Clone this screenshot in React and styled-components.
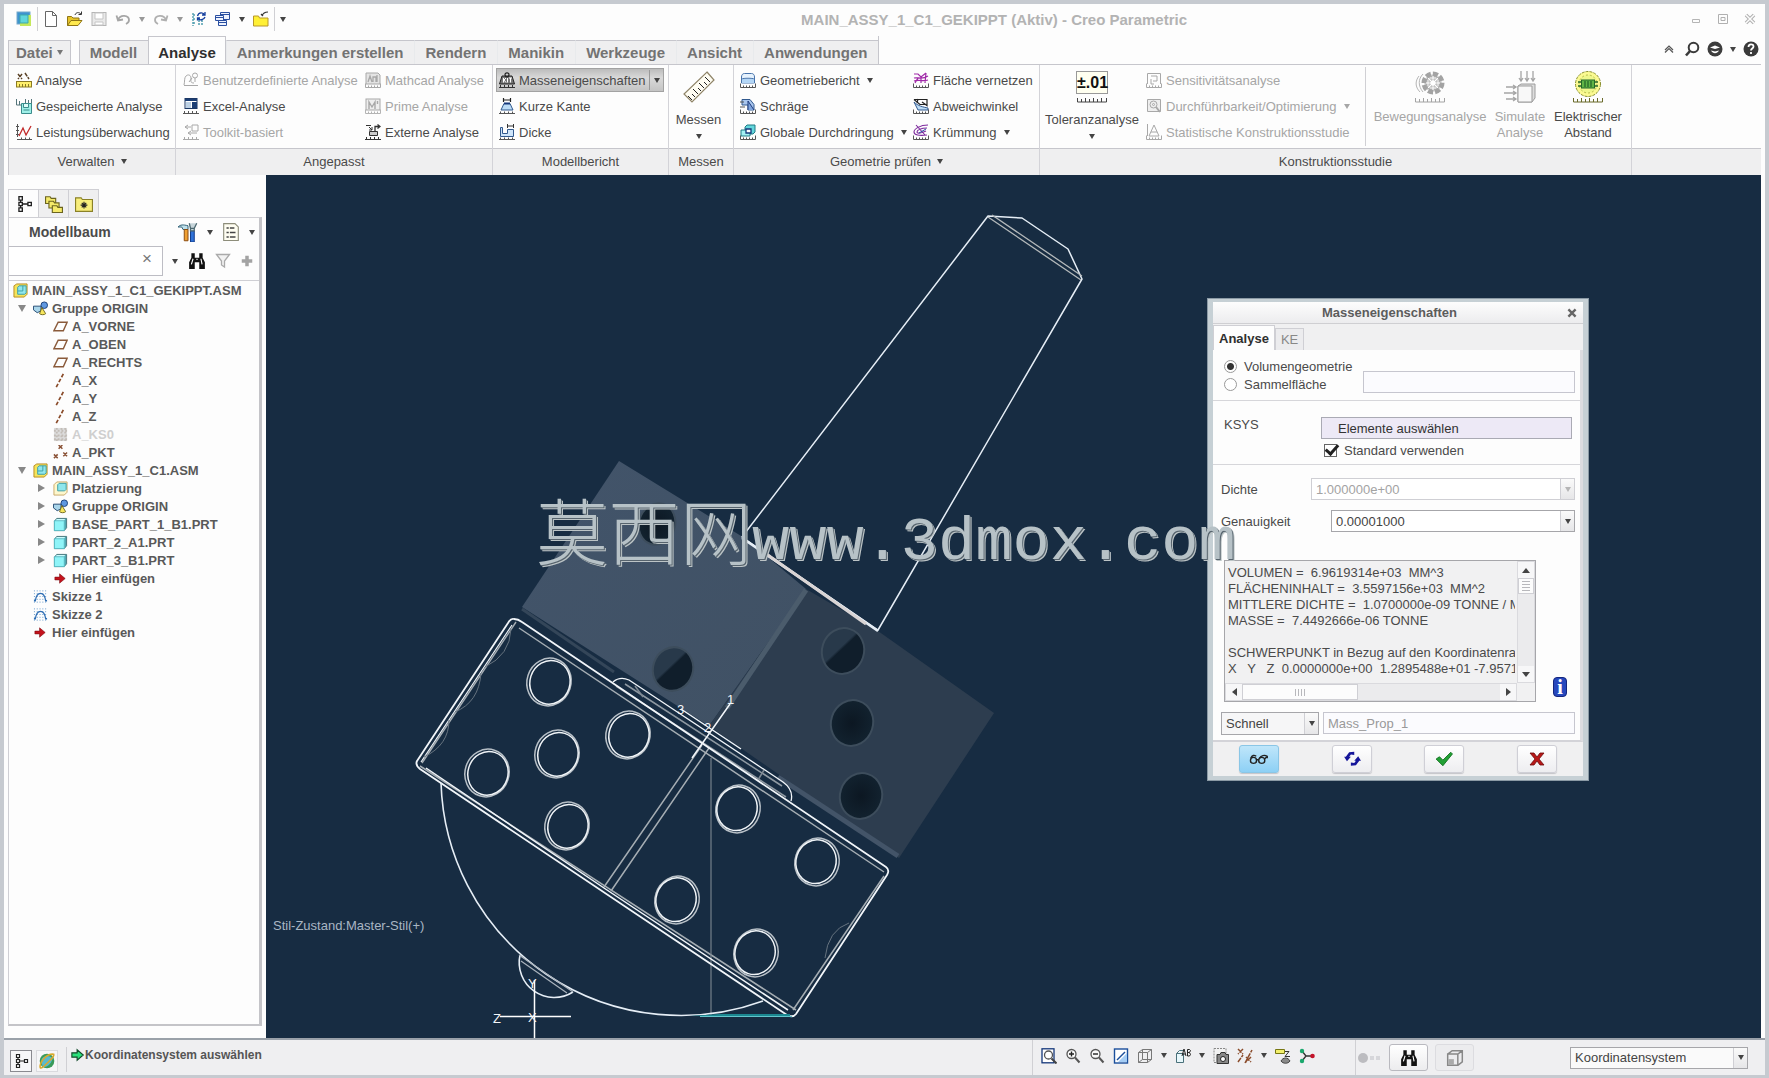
import React from 'react';
import styled, { createGlobalStyle, css } from 'styled-components';

const GlobalStyle = createGlobalStyle`
  * { box-sizing: border-box; }
  body {
    margin: 0;
    font-family: "Liberation Sans", Arial, sans-serif;
    font-size: 13px;
    color: #4a4a4a;
  }
  button, input, select, textarea {
    font: inherit;
    color: inherit;
    margin: 0;
  }
  button {
    background: none;
    border: 0;
    padding: 0;
  }
`;

/* ---------- drawings ---------- */

const ruler = (c = '#555') => (
  <path d="M.5 11.5v4h15v-4M3.5 13.5v2M6.5 13.5v2M9.5 13.5v2M12.5 13.5v2" stroke={c} fill="none" />
);

const bigRuler = (c = '#444') => (
  <path d="M1.5 27v4h29v-4M5.5 28v3M9.5 27v4M13.5 28v3M17.5 27v4M21.5 28v3M25.5 27v4" stroke={c} fill="none" />
);

const asmCube = (
  <>
    <path d="M1 3l3-2h11v11l-3 3H1z" fill="#f4e45a" stroke="#b88a20" />
    <path d="M5 4.500l1.500-1.500H14v7.500L12.500 12H5z" fill="#8fe6ec" stroke="#3b9da5" />
    <path d="M5 8.500h5.500V3" fill="none" stroke="#3b9da5" />
  </>
);

const prtCube = (
  <>
    <path d="M1.500 4.500l2.500-3h10.500v10L12 14.500H1.500z" fill="#4fa9b3" stroke="#46757c" />
    <rect x="1.500" y="4" width="10.500" height="10.500" fill="#8ff4f8" stroke="#5bbcc4" />
    <path d="M3 3.500l1-1.500h9l-1 1.500z" fill="#c9fbfd" />
  </>
);

const binoculars = (
  <>
    <path d="M3 1h3v4h4V1h3v4l2 4v6h-5V9H6v6H1V9l2-4z" fill="#111" />
    <path d="M4.500 6L3 11M11.500 6l1 5M7.500 6.500h1" stroke="#fff" />
  </>
);

const lens = (
  <>
    <circle cx="6.500" cy="6" r="4.500" fill="#fafafa" stroke="#555" strokeWidth="1.300" />
    <path d="M10 9.500l4.500 5" stroke="#555" strokeWidth="2" />
  </>
);

const redArrow = <path d="M2 6.500h5V3l6 5-6 5V9.500H2z" fill="#c4121c" stroke="#7a0c12" strokeWidth=".6" />;

const group = (
  <>
    <path d="M.5 5.500h8v5l-4 2-4-3z" fill="#a9d5ea" stroke="#234a72" />
    <circle cx="12" cy="4.500" r="3.500" fill="#5f97e0" stroke="#1b3f7a" />
    <path d="M9.500 7l4 6.500c-1.500 1.500-5 1.500-6.500 0z" fill="#f7e65c" stroke="#6d6520" />
  </>
);

const treeNodes = (
  <path d="M3.500 1.500h3v3h-3zM3.500 6.500h3v3h-3zM3.500 11.500h3v3h-3zM11.500 6.500h3v3h-3zM5 4.500v2M5 9.500v2M6.500 8h5" fill="none" stroke="#222" strokeWidth="1.200" />
);

const sketch = (
  <>
    <path d="M1 2h14M1 5h14M1 8h14M1 11h14M1 14h14" stroke="#5b93c9" strokeDasharray="1 2" />
    <path d="M1 12.500h1.500c1.500-10.500 9.500-10.500 11 0H15" fill="none" stroke="#2e6db3" strokeWidth="1.400" />
  </>
);

const glyphs = {
  logo: (
    <>
      <rect x="1" y="1" width="13" height="12" fill="#3d93d0" stroke="#77a9ca" />
      <path d="M4 4h11v11H4z" fill="#c4e85b" />
      <path d="M4 4h8v8H4z" fill="#5fd6dc" stroke="#3fa9a9" />
    </>
  ),
  fileNew: <path d="M2.500.5h7l4 4v11h-11zM9.500.5v4h4" fill="#fff" stroke="#666" />,
  fileOpen: (
    <>
      <path d="M.5 14.500v-9h4l1.500 1.500h6v3" fill="#e6c42b" stroke="#8f7515" />
      <path d="M.5 14.500l3.500-5h11l-4 5z" fill="#ffe94e" stroke="#8f7515" />
      <path d="M8 4c1-3 4-3 6-1M14.500.5v3h-3" fill="none" stroke="#333" />
    </>
  ),
  save: (
    <>
      <rect x="1" y="1.500" width="14" height="13" fill="#e9e9e9" stroke="#b5b5b5" />
      <path d="M4 2h8v6H4zM4 11h8v3H4z" fill="#fff" stroke="#c5c5c5" />
    </>
  ),
  undo: <path d="M3 9c2-6 11-5 11 0 0 2-1 3-3 4M1.500 4.500L3 9.500l5-1" fill="none" stroke="#a6a6a6" strokeWidth="1.800" />,
  redo: <path d="M13 9C11 3 2 4 2 9c0 2 1 3 3 4M14.500 4.500L13 9.500l-5-1" fill="none" stroke="#b0b0b0" strokeWidth="1.800" />,
  regen: (
    <>
      <path d="M2 2v13M2 4h3M2 8h3M2 12h3M7 10h5M7 13h6" stroke="#4f9dae" strokeDasharray="2 1" strokeWidth="1.400" />
      <path d="M6.500 5c1-4 6-4 7-1M14 1v3h-3M14 6c-1 3-6 4-7 1M6.500 9.500V7H9" fill="none" stroke="#153f9e" strokeWidth="1.300" />
    </>
  ),
  windows: (
    <g fill="#eef3ff" stroke="#2a4fa0">
      <path d="M5.500 1.500h9v7h-9zM5.500 3.500h9" />
      <path d="M.5 4.500h8v5h-8zM.5 6.500h8" />
      <path d="M3.500 9.500h8v5h-8zM3.500 11.500h8" />
    </g>
  ),
  closeDir: (
    <>
      <path d="M.5 15V5h5l1 2H15v8z" fill="#fff035" stroke="#b8982a" />
      <path d="M8 3l2 2M9 5c1-3 3-4 6-4" fill="none" stroke="#333" strokeWidth="1.200" />
    </>
  ),
  analysis: (
    <>
      <path d="M2 2l4 5M6 2L2 7M9 1l4 6" stroke="#5a4126" strokeWidth="1.500" strokeDasharray="4 1" />
      <rect x=".5" y="9.500" width="15" height="5.500" fill="#ffef6b" stroke="#8b7a22" />
      <path d="M3.500 12v3M6.500 12v3M9.500 12v3M12.500 12v3" stroke="#8b7a22" />
    </>
  ),
  saved: (
    <>
      <path d="M.5 1v6h6M3.500 3v4M9.500 1v4M12.500 2v3M15.500 1v5" fill="none" stroke="#55747a" />
      <path d="M5.500 5.500h10v10h-10z" fill="#9ff0e8" stroke="#3b8c8c" />
      <path d="M7.500 5.500h5v4h-5zM7.500 12h6" fill="#dffcf8" stroke="#3b8c8c" />
    </>
  ),
  monitor: (
    <>
      <path d="M1.500 0v13M0 2.500h3M0 6.500h3M0 10.500h3M1 15.500h15M5.500 13.500v2M9.500 13.500v2M13.500 13.500v2" stroke="#555" />
      <path d="M3 12l4-8 3 7 5-9" fill="none" stroke="#c22a2a" strokeWidth="1.300" />
    </>
  ),
  userDef: (
    <g fill="none" stroke="#a8a8a8">
      <path d="M1 13c1-4 0-7 2-9s5-1 5 2-1 5 3 5" /><circle cx="12" cy="3.500" r="2.500" /><path d="M9 6l-3 4M12 6v4M1 13.500h14" />
    </g>
  ),
  excel: (
    <>
      <rect x="2" y=".5" width="12" height="10" fill="#fff" stroke="#1b3764" />
      <path d="M2 1h12v2H2zM9 4h5v6H9z" fill="#1c3e74" />
      <path d="M3 5h5M3 7h5M3 9h5" stroke="#7ba2c9" />
      <path d="M0 15.500h16M1.500 13v2M5.500 13v2M9.500 13v2M13.500 13v2" stroke="#555" />
    </>
  ),
  toolkit: (
    <g fill="none" stroke="#a8a8a8">
      <path d="M2 3h6M5 1L2 3l3 2M9 1h6v6H9zM14 9H5M8 7l-3 2 3 2" />
      <path d="M0 15.500h16M1.500 13v2M5.500 13v2M9.500 13v2M13.500 13v2" />
    </g>
  ),
  mathcad: (
    <g stroke="#a8a8a8" fill="#e4e4e4">
      <path d="M1 1h12l2 2v9H1z" /><path d="M3 10l2-6 2 6M8 10V5h3v5M12 10V3" fill="none" strokeWidth="1.300" />{ruler('#a8a8a8')}
    </g>
  ),
  prime: (
    <g stroke="#a8a8a8" fill="none">
      <rect x="1" y="1" width="14" height="11" fill="#eee" /><path d="M4 11V4l3 5 3-5v7M12.500 3v3" strokeWidth="1.400" />{ruler('#b4b4b4')}
    </g>
  ),
  external: (
    <g stroke="#333" fill="none">
      <path d="M1 1.500h5M4 3l3 3M7 3v3H4" /><path d="M4.500 7.500h8v4h-8z" fill="#ccc" /><path d="M10 7V2.500h4M12.500.5l2.500 2-2.500 2" strokeWidth="1.300" />
      <path d="M0 15.500h16M1.500 13v2M5.500 13v2M9.500 13v2M13.500 13v2" />
    </g>
  ),
  mass: (
    <>
      <path d="M3 4h10l2.500 8H.5z" fill="#777" stroke="#222" />
      <circle cx="8" cy="2.800" r="2" fill="none" stroke="#222" strokeWidth="1.200" />
      <path d="M4.500 6v4.500M7 6L5 8l2 2.500M8.500 6v4.500M10 6h3M11.500 6v4.500" fill="none" stroke="#fff" />
      <path d="M0 15.500h16M1.500 13v2M5.500 13v2M9.500 13v2M13.500 13v2" stroke="#333" />
    </>
  ),
  shortEdge: (
    <>
      <path d="M4.500 0v4M11.500 0v4M4.500 2h7" stroke="#222" strokeWidth="1.200" />
      <path d="M5 5.500h6l3 6.500H2z" fill="#bcdcf6" stroke="#31598e" />
      <path d="M5 5.500h6" stroke="#15377a" strokeWidth="2" />
      <path d="M0 15.500h16M1.500 13.500v2M5.500 13.500v2M9.500 13.500v2M13.500 13.500v2" stroke="#555" />
    </>
  ),
  thick: (
    <>
      <path d="M1.500 3.500h2v6h5v-4h6v7h-13z" fill="#cfe5fa" stroke="#31598e" />
      <path d="M8.500 0v4M14.500 0v4M8.500 2h6" stroke="#333" />
      <path d="M0 15.500h16M1.500 13.500v2M5.500 13.500v2M9.500 13.500v2M13.500 13.500v2" stroke="#555" />
    </>
  ),
  geometry: (
    <>
      <path d="M1.500 11V5c0-2 1-3.500 3-3.500h7c2 0 3 1.500 3 3.500v6z" fill="#e6f2fd" stroke="#4773ab" />
      <path d="M2 7h12v4H2z" fill="#b3d6f6" />
      <path d="M1.500 7c2-1 11-1 13 0" stroke="#4773ab" fill="none" />
      {ruler('#555')}
    </>
  ),
  draft: (
    <>
      <path d="M2 1.500h8l4 5V12H8V7H2z" fill="#a9c6ee" stroke="#31598e" />
      <path d="M8 12V3l6 9" fill="#7fa5dd" stroke="#1f3b7d" />
      <path d="M0 4h4M0 9h5" stroke="#555" />
      {ruler('#555')}
    </>
  ),
  interference: (
    <>
      <path d="M5 3l2-2h8v7l-2 2H5z" fill="#63d6dc" stroke="#207a84" />
      <path d="M1 6h9v6H1z" fill="#a3f0f3" stroke="#207a84" />
      <path d="M6 5h5v4H6z" fill="#fff" stroke="#15377a" strokeWidth="1.300" />
      {ruler('#555')}
    </>
  ),
  mesh: (
    <>
      <path d="M1 2h4l3 3 5-4M1 6c4-1 8 2 14-2M2 11l3-5M8 11V5M12 11l1-10M1 9c5-2 8 1 14-1" fill="none" stroke="#a02aa8" strokeWidth="1.200" />
      {ruler('#555')}
    </>
  ),
  deviation: (
    <>
      <path d="M1 4c4 4 9 5 14 6v2H5C4 9 2 7 1 4z" fill="#bcdcf6" stroke="#31598e" />
      <path d="M1 1.500h13v6L9 4M1 1.500l6 5h6M5 1l-1 4" fill="none" stroke="#222" strokeWidth="1.200" />
      {ruler('#555')}
    </>
  ),
  curvature: (
    <>
      <path d="M15 1C7 1 1 5 1 8s5 4 13 3M14 4C8 4 4 6 4 8s5 1 9-1M3 1l9 10" fill="none" stroke="#7d2a9d" strokeWidth="1.100" />
      <path d="M13 5L6 9" stroke="#2a55a5" />
      {ruler('#555')}
    </>
  ),
  sensitivity: (
    <g fill="none" stroke="#a8a8a8"><path d="M1.500 12V1.500h13V12M5 4h6v5H7M5 7v5h3" />{ruler('#a8a8a8')}</g>
  ),
  feasibility: (
    <g fill="none" stroke="#a8a8a8"><path d="M1.500 1.500h13v12h-13z" fill="#eee" /><circle cx="7.500" cy="6.500" r="3.500" /><circle cx="7.500" cy="6.500" r="1" /><path d="M10 9l4 5" strokeWidth="2" /></g>
  ),
  statistic: (
    <g fill="none" stroke="#a8a8a8"><path d="M1.500 0v12M3 12L8 1l5 11zM5 8h6" />{ruler('#a8a8a8')}</g>
  ),
  folders: (
    <g fill="#f5ea6a" stroke="#6b641f">
      <path d="M.5 7.500V1.500h4l1 1.500h4v4.500z" /><path d="M3.500 11.500v-6h4l1 1.500h4v4.500z" /><path d="M6.500 15.500v-6h4l1 1.500h4v4.500z" />
    </g>
  ),
  favFolder: (
    <>
      <path d="M.5 14.500v-12h5l1 1.500h9v10.500z" fill="#f8ee7c" stroke="#8a8127" />
      <path d="M8 6v6M5 9h6M6 7l4 4M10 7l-4 4" stroke="#222" />
    </>
  ),
  tools: (
    <>
      <path d="M0 4c2-2 4-2 8-1v3H4L3 4z" fill="#bfe0ea" stroke="#34657a" strokeWidth=".8" />
      <path d="M5 6h3v9H5z" fill="#f0a032" stroke="#8d4d10" strokeWidth=".8" />
      <path d="M10 7h3v9h-3z" fill="#2f72d8" stroke="#143d8a" strokeWidth=".8" />
      <path d="M9 1l1 4h3l2-4M10 5v2h3V5" fill="#c7d5da" stroke="#4c6870" />
    </>
  ),
  list: (
    <>
      <path d="M1.500.5h10l3 3v12h-13z" fill="#fffef2" stroke="#8d8d7a" />
      <path d="M4 4.500h2M7 4.500h4M4 8.500h2M7 8.500h5M4 12.500h2M7 12.500h5" stroke="#444" strokeWidth="1.300" />
    </>
  ),
  binoculars,
  funnel: <path d="M1.500 1.500h13L9.500 8v6l-3-2V8z" fill="#f2f2f2" stroke="#aaa" strokeWidth="1.300" />,
  plus: <path d="M8 2v12M2 8h12" stroke="#a3a3a3" strokeWidth="4" />,
  asm: asmCube,
  prt: prtCube,
  group,
  placement: (
    <>
      <path d="M1 4l3-3h11v11l-3 3H1z" fill="#fdf7cd" stroke="#c8a766" />
      <path d="M5 4l1.500-1.500H14V9l-1.500 1.500H5z" fill="#8fe6ec" stroke="#3b9da5" />
    </>
  ),
  plane: <path d="M5.500 3.500h9.500l-4 9H1z" fill="none" stroke="#8a5a3a" strokeWidth="1.500" />,
  axis: <path d="M11 1L3 16" stroke="#8a4b2a" strokeWidth="1.800" strokeDasharray="4 2" />,
  csys: (
    <>
      <rect x="1" y="1" width="14" height="14" fill="#dcdcdc" />
      <path d="M1 4h14M1 9h14M1 13h14M4 1v14M9 1v14M13 1v14" stroke="#c2bcb6" strokeDasharray="2 2" strokeWidth="2" />
    </>
  ),
  point: <path d="M6 0l4 4M10 0L6 4M1 10l4 4M5 10l-4 4M11 8l4 4M15 8l-4 4" stroke="#8a5236" strokeWidth="1.600" />,
  sketch,
  insert: redArrow,
  treeNodes,
  browser: (
    <>
      <circle cx="8" cy="8" r="6.500" fill="#3a9b5a" />
      <path d="M3 8c0-5 8-6 10-2-2 6-6 8-9 7z" fill="#58b9cf" />
      <path d="M2 14C1 9 8 1 14 2c1 2-3 5-6 8-3 3-5 5-6 4z" fill="none" stroke="#d9a92d" strokeWidth="1.400" />
    </>
  ),
  prompt: <path d="M1 5.500h6V2l7 6-7 6v-3.500H1z" fill="#2be07a" stroke="#124a2a" strokeWidth="1.300" />,
  refit: (
    <>
      <rect x="1" y=".8" width="12" height="14" fill="#fff" stroke="#15377a" strokeWidth="1.300" />
      <circle cx="7.500" cy="7" r="4" fill="none" stroke="#555" strokeWidth="1.300" />
      <path d="M10.500 10.500l5 5" stroke="#444" strokeWidth="2" />
    </>
  ),
  zoomIn: <>{lens}<path d="M4 6h5M6.500 3.500v5" stroke="#222" strokeWidth="1.400" /></>,
  zoomOut: <>{lens}<path d="M4 6h5" stroke="#222" strokeWidth="1.400" /></>,
  repaint: (
    <>
      <rect x="1.500" y="1" width="13" height="14" fill="#fff" stroke="#1b4f9c" strokeWidth="1.400" />
      <path d="M14 5v9H5z" fill="#a5cdf5" /><path d="M4 12l8-8" stroke="#1b4f9c" strokeWidth="1.500" />
    </>
  ),
  display: <path d="M1.500 4.500h9v10h-9zM1.500 4.500l4-3h9v10l-4 3M10.500 4.500l4-3M5.500 1.500v10h9M1.500 14.500l4-3" fill="none" stroke="#777" />,
  saved3d: (
    <>
      <path d="M1.500 5.500h7v9h-7zM1.500 5.500l3-3h4" fill="#e8f7fb" stroke="#49707a" />
      <path d="M7 8l2-7 2 7M8 6h2M12.500 8V1.500h2l1 1-1 2 1 2-1 1.500zM12.500 4.500h2" fill="none" stroke="#222" />
    </>
  ),
  camera: (
    <>
      <rect x="1" y=".5" width="12" height="14" fill="#f2f2f2" stroke="#888" strokeDasharray="2 1" />
      <path d="M4 6.500h3l1-2h4l1 2h2.500v9H4z" fill="#888" stroke="#333" /><circle cx="10" cy="11" r="2.500" fill="#fff" stroke="#222" />
    </>
  ),
  datum: <path d="M1 1l5 5M6 1L1 6M8 15L15 2M9 9l5 5M14 9l-5 5M1 14l5-7" stroke="#8a4b2a" strokeWidth="1.500" strokeDasharray="5 1" />,
  annotate: (
    <>
      <path d="M.5 1.500h9v4h-9z" fill="#f3f06c" stroke="#777714" /><path d="M10 3.500h4l-4 5h5" fill="none" stroke="#333" />
      <path d="M6 13c2-4 7-4 9 0-2 3-7 3-9 0z" fill="#8a8a8a" stroke="#444" />
    </>
  ),
  spin: (
    <>
      <path d="M3 3l4 5-4 5M7 8h6" fill="none" stroke="#333" strokeWidth="1.400" />
      <circle cx="3" cy="3" r="2.200" fill="#1aa86d" /><circle cx="3" cy="13" r="2.200" fill="#1aa86d" /><circle cx="13.500" cy="8" r="2.300" fill="#c4132a" />
    </>
  ),
  box3d: (
    <>
      <path d="M1.500 4.500h9v10h-9zM1.500 4.500l4-3h9v10l-4 3M10.500 4.500l4-3" fill="none" stroke="#888" strokeWidth="1.300" />
      <rect x="2" y="9" width="5" height="5" fill="#aaa" />
    </>
  ),
  minimize: <path d="M4.500 8.500h7v3h-7z" fill="none" stroke="#b5b5b5" />,
  maximize: <path d="M3.500 3.500h9v9h-9zM6 6.500h4v3H6z" fill="none" stroke="#b0b0b0" />,
  closeWin: (
    <>
      <path d="M4 4l8 8M12 4l-8 8" stroke="#b0b0b0" strokeWidth="3.500" />
      <path d="M4 4l8 8M12 4l-8 8" stroke="#fdfdfd" strokeWidth="1.500" />
    </>
  ),
  collapse: <path d="M4 9l4-4 4 4M4 11.500l4-4 4 4" fill="none" stroke="#555" strokeWidth="1.200" />,
  search: (
    <>
      <circle cx="9.500" cy="6.500" r="4.800" fill="none" stroke="#3a3a3a" strokeWidth="2" /><path d="M6 10l-4 4.500" stroke="#3a3a3a" strokeWidth="2.600" />
    </>
  ),
  learn: (
    <>
      <circle cx="8" cy="8" r="7.500" fill="#3d3d3d" /><path d="M3 6.500l5-2 5 2-5 1.500z" fill="#fff" /><path d="M4 9.500c2 3.500 6 3.500 8 0l-4 1z" fill="#fff" />
    </>
  ),
  help: (
    <>
      <circle cx="8" cy="8" r="7.500" fill="#3a3a3a" /><path d="M5.500 6c0-3.500 5-3.500 5-.5 0 2-2.500 2-2.500 4M8 11v2" fill="none" stroke="#fff" strokeWidth="1.800" />
    </>
  ),
  glasses: (
    <g fill="none" stroke="#222" strokeWidth="1">
      <circle cx="4" cy="9" r="2.200" /><circle cx="10" cy="9" r="2.200" />
      <path d="M6.200 8.500h1.600M2 7.500C3 5 4.500 5 6 6M8.300 7.500C9.500 5.500 12 5 14 6v1.500M12 8l1.500-1.500" />
    </g>
  ),
  repeat: (
    <g fill="#16169a">
      <path d="M10 1.500L5.500 2 2.500 6H1l2.500 4L7 6H5.500L7 4l3 .5z" />
      <path d="M7 14l4.500-.5 3-4H16l-2.500-4L10 9.500h1.500l-1.500 2-3-.5z" />
    </g>
  ),
  ok: <path d="M1 8l3-2 3 3 7-7 1.500 1.500L7 14z" fill="#22a035" stroke="#12701f" strokeWidth=".8" />,
  cancel: <path d="M1 2h4l3 4 3-4h4l-5 6 5 6h-4l-3-4-3 4H1l5-6z" fill="#b81818" stroke="#6d0a0a" strokeWidth=".8" />,
};

const bigGlyphs = {
  measure: (
    <>
      <path d="M24 1l7 8L9 31 1 23z" fill="#fffdf3" stroke="#8f8468" strokeWidth="1.200" />
      <path d="M9 29l-4-4M12 26l-3-3M15 23l-5-5M18 20l-3-3M21 17l-5-5M24 14l-3-3M27 11l-5-5" stroke="#222" />
    </>
  ),
  motion: (
    <>
      <g fill="#d7d7d7" stroke="#a3a3a3">
        <circle cx="19" cy="12" r="9" strokeWidth="5" strokeDasharray="5 2" /><circle cx="19" cy="12" r="7" /><circle cx="19" cy="12" r="3.500" fill="#fff" />
        <path d="M19 5v4M19 15v4M12 12h4M22 12h4M14 7l3 3M24 17l-3-3M24 7l-3 3M14 17l3-3" stroke="#fff" />
      </g>
      <path d="M5 5c-4 5-4 11 1 16M9 3C4 8 4 15 9 21" fill="none" stroke="#b5b5b5" />
      {bigRuler('#a3a3a3')}
    </>
  ),
  simulate: (
    <>
      <path d="M14 15l3-2h14v14l-3 4H14z" fill="#ddd" stroke="#9c9c9c" /><path d="M14 15h14v16H14z" fill="#f8f8f8" stroke="#9c9c9c" />
      <path d="M17 0v9M23 0v9M29 0v9M15 7l2 3 2-3M21 7l2 3 2-3M27 7l2 3 2-3M2 16h9M0 22h11M2 28h9M9 14l3 2-3 2M9 20l3 2-3 2M9 26l3 2-3 2" fill="none" stroke="#a5a5a5" strokeWidth="1.300" />
    </>
  ),
  electric: (
    <>
      <circle cx="16" cy="13" r="12.500" fill="#fbfa92" stroke="#8a9030" strokeDasharray="3 1" />
      <circle cx="16" cy="13" r="9" fill="#eef78c" stroke="#b6bc4b" strokeDasharray="2 2" />
      <rect x="9.500" y="9" width="13" height="8" fill="#5fb545" stroke="#24682a" />
      <path d="M6 11h3M6 15h3M23 11h3M23 15h3M13 10v6M16 10v6M19 10v6" stroke="#24682a" strokeWidth="1.300" />
      {bigRuler('#6a6a2a')}
    </>
  ),
};

const Svg = styled.svg`
  display: block;
  flex: none;
`;

const Glyph = ({ name, size = 16 }) => (
  <Svg width={size} height={size} viewBox="0 0 16 16" aria-hidden="true">{glyphs[name]}</Svg>
);

const BigGlyph = ({ name }) => (
  <Svg width="32" height="32" viewBox="0 0 32 32" aria-hidden="true">{bigGlyphs[name]}</Svg>
);

const Caret = styled.span`
  flex: none;
  width: 0;
  height: 0;
  border: 3px solid transparent;
  border-top: 5px solid ${p => p.$color || '#444'};
  border-bottom: 0;
`;

/* ---------- window frame ---------- */

const Frame = styled.div`
  height: 100vh;
  display: flex;
  flex-direction: column;
  border: 4px solid #c6cad0;
  border-bottom-width: 3px;
  background: #fdfdfd;
  overflow: hidden;
`;

const TitleBar = styled.header`
  display: flex;
  align-items: center;
  height: 30px;
  padding: 0 7px 0 12px;
`;

const QuickBar = styled.div`
  display: flex;
  align-items: center;
  gap: 8px;
  flex: 11;
`;

const WindowTitle = styled.h1`
  margin: 0;
  font-size: 15px;
  font-weight: bold;
  color: #b3b3b3;
`;

const WindowButtons = styled.div`
  flex: 8;
  display: flex;
  justify-content: flex-end;
  gap: 11px;
`;

const Divider = styled.span`
  flex: none;
  align-self: stretch;
  width: 1px;
  background: #d0d0d4;
`;

const QuickDivider = styled(Divider)`
  align-self: center;
  height: 24px;
  margin: 0 -3px;
`;

const IconButton = styled.button`
  display: flex;
  align-items: center;
  justify-content: center;
`;

/* ---------- ribbon ---------- */

const TabStrip = styled.nav`
  display: flex;
  align-items: flex-end;
  height: 30px;
  padding: 0 6px 0 4px;
`;

const TabGroup = styled.div`
  display: flex;
  align-items: flex-end;
  border-right: 1px solid #c6c6cc;
`;

const Tab = styled.button`
  height: ${p => (p.$active ? 28 : 24)}px;
  padding: ${p => (p.$active ? '3px 9px 0' : '0 11px 0 10px')};
  display: flex;
  align-items: center;
  gap: 4px;
  font-size: 15px;
  font-weight: bold;
  color: ${p => (p.$active ? '#2f2f2f' : '#737373')};
  background: ${p => (p.$active ? '#fdfdfd' : '#efeff0')};
  border-top: 1px solid #c6c6cc;
  border-left: 1px solid ${p => (p.$edge || p.$active ? '#c6c6cc' : '#e8eaec')};
  ${p => p.$active && css`border-right: 1px solid #c6c6cc;`}
  ${p => p.$file && css`
    margin-right: 8px;
    padding: 0 7px;
    border-right: 1px solid #c6c6cc;
  `}
`;

const TabTools = styled.div`
  margin-left: auto;
  align-self: center;
  display: flex;
  align-items: center;
  gap: 7px;
`;

const Ribbon = styled.section`
  display: flex;
  height: 111px;
  margin: 0 4px;
  border-top: 1px solid #c6c6cc;
  border-left: 1px solid #c6c6cc;
  background: linear-gradient(#fdfdfd 83px, #c6c6cc 83px, #c6c6cc 84px, #efeff0 84px);
`;

const RibbonGroup = styled.div`
  flex: none;
  width: ${p => p.$width}px;
  display: flex;
  flex-direction: column;
  border-right: 1px solid #d3d3d8;
`;

const GroupBody = styled.div`
  height: 83px;
  padding: 2px 0 2px ${p => p.$pad || 7}px;
  display: flex;
`;

const GroupLabel = styled.div`
  flex: 1;
  display: flex;
  align-items: center;
  justify-content: center;
  gap: 6px;
`;

const Column = styled.div`
  flex: none;
  width: ${p => p.$width}px;
  display: flex;
  flex-direction: column;
`;

const Command = styled.button`
  height: 26px;
  display: flex;
  align-items: center;
  gap: 4px;
  white-space: nowrap;
  color: ${p => (p.disabled ? '#a6a6a6' : '#4a4a4a')};
  ${Caret} { margin-left: 3px; }
`;

const SplitCommand = styled.div`
  display: flex;
  align-items: center;
  height: 24px;
  margin: 1px 0;
  width: 168px;
  padding-left: 2px;
  border: 1px solid #a2a2a2;
  background: linear-gradient(#bcbcbc, #d9d9d9 40%, #c4c4c4);
`;

const SplitArrow = styled.button`
  margin-left: auto;
  width: 14px;
  height: 20px;
  border-left: 1px solid #999;
  display: flex;
  align-items: center;
  justify-content: center;
`;

const Indent = styled.div`
  padding-left: 3px;
`;

const StudyColumn = styled.div`
  padding-left: 5px;
`;

const BigCommand = styled.button`
  display: flex;
  flex-direction: column;
  align-items: center;
  width: ${p => p.$width}px;
  padding-top: 4px;
  line-height: 16px;
  color: ${p => (p.disabled ? '#a6a6a6' : '#4a4a4a')};
  ${Caret} { margin-top: 6px; }
`;

const BigLabel = styled.span`
  margin-top: ${p => p.$gap || 6}px;
  white-space: pre-line;
`;

const Tolerance = styled.span`
  width: 32px;
  height: 23px;
  border: 1px solid #999;
  background: #fffff0;
  font-size: 16px;
  line-height: 22px;
  font-weight: bold;
  color: #111;
`;

const verwalten = [
  ['analysis', 'Analyse'],
  ['saved', 'Gespeicherte Analyse'],
  ['monitor', 'Leistungsüberwachung'],
];
const angepasst = [
  ['userDef', 'Benutzerdefinierte Analyse', true],
  ['excel', 'Excel-Analyse'],
  ['toolkit', 'Toolkit-basiert', true],
];
const angepasst2 = [
  ['mathcad', 'Mathcad Analyse', true],
  ['prime', 'Prime Analyse', true],
  ['external', 'Externe Analyse'],
];
const pruefen = [
  ['geometry', 'Geometriebericht', false, true],
  ['draft', 'Schräge'],
  ['interference', 'Globale Durchdringung', false, true],
];
const pruefen2 = [
  ['mesh', 'Fläche vernetzen'],
  ['deviation', 'Abweichwinkel'],
  ['curvature', 'Krümmung', false, true],
];
const studie = [
  ['sensitivity', 'Sensitivitätsanalyse', true],
  ['feasibility', 'Durchführbarkeit/Optimierung', true, true],
  ['statistic', 'Statistische Konstruktionsstudie', true],
];

function CommandColumn({ items, width }) {
  return (
    <Column $width={width}>
      {items.map(([icon, label, disabled, menu]) => (
        <Command key={label} disabled={disabled}>
          <Glyph name={icon} />
          {label}
          {menu && <Caret $color={disabled ? '#a6a6a6' : '#444'} />}
        </Command>
      ))}
    </Column>
  );
}

function RibbonBar() {
  return (
    <Ribbon>
      <RibbonGroup $width={167}>
        <GroupBody><CommandColumn items={verwalten} width={150} /></GroupBody>
        <GroupLabel>Verwalten <Caret /></GroupLabel>
      </RibbonGroup>
      <RibbonGroup $width={317}>
        <GroupBody>
          <CommandColumn items={angepasst} width={182} />
          <CommandColumn items={angepasst2} width={120} />
        </GroupBody>
        <GroupLabel>Angepasst</GroupLabel>
      </RibbonGroup>
      <RibbonGroup $width={176}>
        <GroupBody $pad={3}>
          <Column $width={168}>
            <SplitCommand>
              <Command><Glyph name="mass" />Masseneigenschaften</Command>
              <SplitArrow aria-label="Masseneigenschaften Optionen"><Caret /></SplitArrow>
            </SplitCommand>
            <Indent>
              <Command><Glyph name="shortEdge" />Kurze Kante</Command>
              <Command><Glyph name="thick" />Dicke</Command>
            </Indent>
          </Column>
        </GroupBody>
        <GroupLabel>Modellbericht</GroupLabel>
      </RibbonGroup>
      <RibbonGroup $width={65}>
        <GroupBody $pad={1}>
          <BigCommand $width={57}>
            <BigGlyph name="measure" />
            <BigLabel $gap={9}>Messen</BigLabel>
            <Caret />
          </BigCommand>
        </GroupBody>
        <GroupLabel>Messen</GroupLabel>
      </RibbonGroup>
      <RibbonGroup $width={306}>
        <GroupBody $pad={6}>
          <CommandColumn items={pruefen} width={173} />
          <CommandColumn items={pruefen2} width={125} />
        </GroupBody>
        <GroupLabel>Geometrie prüfen <Caret /></GroupLabel>
      </RibbonGroup>
      <RibbonGroup $width={592}>
        <GroupBody $pad={3}>
          <BigCommand $width={98}>
            <Tolerance>±.01</Tolerance>
            <Svg width="32" height="9" viewBox="0 23 32 9" aria-hidden="true">{bigRuler()}</Svg>
            <BigLabel $gap={9}>Toleranzanalyse</BigLabel>
            <Caret />
          </BigCommand>
          <StudyColumn>
            <CommandColumn items={studie} width={219} />
          </StudyColumn>
          <Divider />
          <BigCommand $width={128} disabled>
            <BigGlyph name="motion" />
            <BigLabel>Bewegungsanalyse</BigLabel>
          </BigCommand>
          <BigCommand $width={52} disabled>
            <BigGlyph name="simulate" />
            <BigLabel>{'Simulate\nAnalyse'}</BigLabel>
          </BigCommand>
          <BigCommand $width={84}>
            <BigGlyph name="electric" />
            <BigLabel>{'Elektrischer\nAbstand'}</BigLabel>
          </BigCommand>
        </GroupBody>
        <GroupLabel>Konstruktionsstudie</GroupLabel>
      </RibbonGroup>
    </Ribbon>
  );
}

/* ---------- model tree ---------- */

const Main = styled.main`
  flex: 1;
  min-height: 0;
  display: flex;
`;

const SidePanel = styled.aside`
  flex: none;
  width: 262px;
  padding: 14px 4px 12px 4px;
  display: flex;
  flex-direction: column;
`;

const PanelTabs = styled.div`
  display: flex;
`;

const PanelTab = styled.button`
  width: 31px;
  height: 28px;
  display: flex;
  align-items: center;
  justify-content: center;
  border: 1px solid #cfcfd4;
  border-width: 1px 1px 0 1px;
  margin-right: -1px;
  background: ${p => (p.$active ? '#fdfdfd' : '#efeff0')};
`;

const PanelBody = styled.div`
  flex: 1;
  border: 1px solid #cfcfd4;
  border-right: 3px solid #c4c4c8;
  border-bottom: 2px solid #c4c4c8;
`;

const PanelHead = styled.div`
  display: flex;
  align-items: center;
  height: 28px;
  padding: 0 4px 0 20px;
`;

const PanelTitle = styled.h2`
  margin: 0 auto 0 0;
  font-size: 14px;
`;

const HeadTools = styled.div`
  display: flex;
  align-items: center;
  gap: 9px;
`;

const FilterRow = styled.div`
  display: flex;
  align-items: center;
  justify-content: space-between;
  height: 35px;
  padding: 0 5px 4px 0;
  border-bottom: 1px solid #cfcfd4;
`;

const FilterBox = styled.div`
  display: flex;
  align-items: center;
  width: 154px;
  height: 30px;
  border: 1px solid #bdbdc4;
  border-left: 0;
  background: #fff;
  color: #777;
`;

const FilterInput = styled.input`
  flex: 1;
  min-width: 0;
  height: 100%;
  border: 0;
  background: none;
`;

const ClearButton = styled.button`
  width: 30px;
  padding-bottom: 5px;
  font-size: 17px;
`;

const Tree = styled.ul`
  list-style: none;
  margin: 0;
  padding: 0;
`;

const Node = styled.li`
  display: flex;
  align-items: center;
  gap: 4px;
  height: 18px;
  padding-left: ${p => (p.$level ? p.$level * 20 - 15 : 4)}px;
  font-weight: bold;
  white-space: nowrap;
  color: ${p => (p.$muted ? '#cfcfcf' : '#595959')};
`;

const Toggle = styled.span`
  width: 15px;
  display: flex;
  justify-content: center;
`;

const Triangle = styled.span`
  border: 4px solid transparent;
  ${p => (p.$open
    ? css`border-top: 7px solid #888; border-bottom: 0;`
    : css`border-left: 7px solid #888; border-right: 0;`)}
`;

const nodes = [
  { level: 0, icon: 'asm', text: 'MAIN_ASSY_1_C1_GEKIPPT.ASM' },
  { level: 1, icon: 'group', text: 'Gruppe ORIGIN', state: 'open' },
  { level: 2, icon: 'plane', text: 'A_VORNE' },
  { level: 2, icon: 'plane', text: 'A_OBEN' },
  { level: 2, icon: 'plane', text: 'A_RECHTS' },
  { level: 2, icon: 'axis', text: 'A_X' },
  { level: 2, icon: 'axis', text: 'A_Y' },
  { level: 2, icon: 'axis', text: 'A_Z' },
  { level: 2, icon: 'csys', text: 'A_KS0', muted: true },
  { level: 2, icon: 'point', text: 'A_PKT' },
  { level: 1, icon: 'asm', text: 'MAIN_ASSY_1_C1.ASM', state: 'open' },
  { level: 2, icon: 'placement', text: 'Platzierung', state: 'closed' },
  { level: 2, icon: 'group', text: 'Gruppe ORIGIN', state: 'closed' },
  { level: 2, icon: 'prt', text: 'BASE_PART_1_B1.PRT', state: 'closed' },
  { level: 2, icon: 'prt', text: 'PART_2_A1.PRT', state: 'closed' },
  { level: 2, icon: 'prt', text: 'PART_3_B1.PRT', state: 'closed' },
  { level: 2, icon: 'insert', text: 'Hier einfügen' },
  { level: 1, icon: 'sketch', text: 'Skizze 1' },
  { level: 1, icon: 'sketch', text: 'Skizze 2' },
  { level: 1, icon: 'insert', text: 'Hier einfügen' },
];

function ModelTree() {
  return (
    <SidePanel>
      <PanelTabs>
        <PanelTab $active aria-label="Modellbaum"><Glyph name="treeNodes" size={18} /></PanelTab>
        <PanelTab aria-label="Ordner-Browser"><Glyph name="folders" size={18} /></PanelTab>
        <PanelTab aria-label="Favoriten"><Glyph name="favFolder" size={18} /></PanelTab>
      </PanelTabs>
      <PanelBody>
        <PanelHead>
          <PanelTitle>Modellbaum</PanelTitle>
          <HeadTools>
            <Glyph name="tools" size={20} /><Caret />
            <Glyph name="list" size={18} /><Caret />
          </HeadTools>
        </PanelHead>
        <FilterRow>
          <FilterBox>
            <FilterInput aria-label="Filter" />
            <ClearButton aria-label="Filter löschen">×</ClearButton>
          </FilterBox>
          <Caret />
          <Glyph name="binoculars" size={18} />
          <Glyph name="funnel" />
          <Glyph name="plus" size={14} />
        </FilterRow>
        <Tree>
          {nodes.map((n, i) => (
            <Node key={i} $level={n.level} $muted={n.muted}>
              {n.level > 0 && <Toggle>{n.state && <Triangle $open={n.state === 'open'} />}</Toggle>}
              <Glyph name={n.icon} size={15} />
              {n.text}
            </Node>
          ))}
        </Tree>
      </PanelBody>
    </SidePanel>
  );
}

/* ---------- graphics window ---------- */

const Viewport = styled.section`
  position: relative;
  flex: 1;
  min-width: 0;
  background: #172c42;
  overflow: hidden;
`;

const Gutter = styled.div`
  flex: none;
  width: 4px;
`;

const Drawing = styled.svg`
  display: block;
  width: 100%;
  height: 100%;
`;

const StyleState = styled.div`
  position: absolute;
  left: 7px;
  bottom: 105px;
  color: #a9b6c4;
`;

const Watermark = styled.div`
  position: absolute;
  z-index: 3;
  left: 264px;
  top: 308px;
  padding-left: 6px;
  display: flex;
  align-items: baseline;
  line-height: 90px;
  font-family: "Liberation Mono", monospace;
  font-size: 62px;
  white-space: nowrap;
  color: #b7c2c7;
  text-shadow: 1px 1px 0 #56636d, 2px 2px 0 #bcc4c6;
  pointer-events: none;
`;

const WatermarkName = styled.span`
  font-family: "Noto Sans CJK SC", sans-serif;
  font-size: 72px;
  font-weight: 300;
`;

const rings = [
  [549, 682, -1], [557, 754, -1], [628, 735, -1], [487, 773, -1], [567, 826, -1],
  [738, 809, 1], [817, 862, 1], [677, 900, 1], [756, 953, 1],
];

const bores = [
  [657, 524, 18, 21], [673, 669, 20, 22], [843, 651, 21, 23], [852, 723, 21, 23], [861, 796, 21, 23],
];

function Model() {
  return (
    <Drawing viewBox="266 175 1495 863" preserveAspectRatio="xMinYMin slice" fill="none" role="img" aria-label="Modell">
      <defs>
        <linearGradient id="faceLeft" x1="0" y1="0" x2="1" y2="1">
          <stop offset="0" stopColor="#42546a" />
          <stop offset="1" stopColor="#405164" />
        </linearGradient>
        <linearGradient id="boreSplit" x1="0" y1="0" x2="1" y2=".6">
          <stop offset="0.500" stopColor="#28394a" />
          <stop offset="0.550" stopColor="#101e2b" />
        </linearGradient>
        <radialGradient id="boreDeep">
          <stop offset="0" stopColor="#0c1722" />
          <stop offset="1" stopColor="#12222f" />
        </radialGradient>
      </defs>

      <path d="M619 461L746 539L806 589L709 726L522 607Z" fill="url(#faceLeft)" />
      <path d="M806 589L878 631L994 713L899 858L709 726Z" fill="#2d3d4f" />
      <path d="M806 590L727 708" stroke="#4b5c6c" strokeWidth="5" />
      <path d="M778 777L898 856" stroke="#435468" strokeWidth="5" />
      <path d="M522 609L614 672" stroke="#344659" strokeWidth="3" />
      {bores.map(([x, y, rx, ry], i) => (
        <ellipse
          key={`${x}-${y}`}
          cx={x} cy={y} rx={rx} ry={ry}
          transform={`rotate(18 ${x} ${y})`}
          fill={i === 1 || i === 2 ? 'url(#boreSplit)' : 'url(#boreDeep)'}
          stroke="#3d4d5c" strokeWidth="2"
        />
      ))}

      {/* handle */}
      <g stroke="#e6eef6" strokeWidth="1.500" strokeLinejoin="round">
        <path d="M742 537L988 216L1022 218L1068 249L1082 279L878 630Z" />
        <path d="M742 538L878 631" strokeWidth="2.500" />
        <path d="M988 217L1081 280M992 215L1082 276" stroke="#b3b8ba" strokeWidth="1.300" />
        <path d="M765 553L866 624" stroke="#d9d4d4" strokeWidth="3" />
      </g>

      {/* base block */}
      <g stroke="#a5adb3" strokeWidth="1.500">
        <path d="M519 628L884 872M516 622L422 763M420 766L796 1010M884 876L793 1010" />
        <path d="M702 745L604 887M709 748L611 891" />
        <path d="M616 686L786 797M625 684L782 786" stroke="#8f99a2" />
        <path d="M635 686L643 697M764 770L758 780" stroke="#7f8993" />
        <path d="M711 758V1016" stroke="#75818b" strokeWidth="1.200" />
      </g>
      <g stroke="#f2f6fa" strokeWidth="1.800" strokeLinejoin="round">
        <path d="M514 619Q518 619 522 622L886 867Q890 870 887 875L796 1014Q793 1018 787 1015L420 769Q415 765 417 761L508 623Q511 618 514 619Z" />
        <path d="M426 768L604 888L788 1010" strokeWidth="1.500" />
        <path d="M512 625L421 762" strokeWidth="1.200" />
        <path d="M613 682Q620 676 629 680L783 782Q794 790 791 801" strokeWidth="1.300" />
        <path d="M730 704L692 758M681 709L741 749" strokeWidth="1.500" />
      </g>
      <g stroke="#66737f">
        <path d="M511 629Q510 655 485 667M481 673Q479 702 455 712M449 720Q449 745 424 757M849 923Q828 930 825 958" />
      </g>
      {rings.map(([x, y, side]) => (
        <g key={`${x}-${y}`} transform={`rotate(18 ${x} ${y})`}>
          <ellipse cx={x} cy={y} rx="22" ry="24" stroke="#b7bfc6" strokeWidth="1.500" />
          <ellipse cx={x - side} cy={y} rx="20" ry="22" stroke="#f0f4f7" strokeWidth="1.500" />
        </g>
      ))}

      {/* bowl and foot */}
      <g stroke="#e6eef6" strokeWidth="1.600">
        <path d="M441 783A240 240 0 0 0 763 1001" />
        <path d="M520 955A35 35 0 0 0 573 992" />
        <path d="M519 955L573 992M521 961L567 993" stroke="#aab3bd" strokeWidth="1.200" />
      </g>
      <path d="M690 1016L720 1014H790V1017Z" fill="#1b8790" />
      <path d="M700 1016.500H792" stroke="#62c5cc" />

      <path d="M534.500 980V1038M500 1016.500H571" stroke="#fff" strokeWidth="1.500" />
      <g fill="#f4f6f8" fontSize="13">
        <text x="727" y="704">1</text>
        <text x="704" y="732">2</text>
        <text x="677" y="714">3</text>
        <text x="528" y="988">Y</text>
        <text x="493" y="1023">Z</text>
        <text x="528" y="1022">X</text>
      </g>
    </Drawing>
  );
}

/* ---------- mass properties dialog ---------- */

const Dialog = styled.form`
  position: absolute;
  z-index: 2;
  top: 123px;
  right: 172px;
  width: 382px;
  display: flex;
  flex-direction: column;
  border: 1px solid #dfe6e9;
  outline: 1px solid #8b9aa5;
  outline-offset: -1px;
  padding: 3px 5px 4px;
  background: #c6d0d5;
`;

const DialogInner = styled.div`
  background: #f0f0f1;
`;

const DialogTitle = styled.div`
  display: flex;
  align-items: center;
  height: 22px;
  padding-right: 5px;
  border-bottom: 1px solid #cfcfd2;
  background: linear-gradient(#fdfdfd, #ececee);
`;

const DialogName = styled.h2`
  flex: 1;
  margin: 0;
  text-align: center;
  font-size: 13px;
  color: #5c5c5c;
`;

const DialogTabs = styled.div`
  display: flex;
  align-items: flex-end;
  height: 26px;
`;

const DialogTab = styled.button`
  height: ${p => (p.$active ? 25 : 22)}px;
  padding: 0 5px;
  border: 1px solid #cfcfd4;
  border-bottom: 0;
  font-weight: ${p => (p.$active ? 'bold' : 'normal')};
  color: ${p => (p.$active ? '#2f2f2f' : '#888')};
  background: ${p => (p.$active ? '#fdfdfd' : '#ececee')};
`;

const Page = styled.div`
  background: #fdfdfd;
  border-right: 3px solid #dcdce0;
  border-bottom: 2px solid #d3d3d8;
`;

const Section = styled.div`
  display: flex;
  padding: ${p => p.$pad || '0'};
  border-bottom: 1px solid #d6d6da;
`;

const Choices = styled.div`
  flex: 1;
`;

const Choice = styled.label`
  display: flex;
  align-items: center;
  gap: 7px;
  height: 18px;
`;

const CheckRow = styled(Choice)`
  height: 22px;
  padding-left: 3px;
`;

const SinkField = styled.div`
  align-self: flex-end;
`;

const DensityBlock = styled.div`
  padding-top: 13px;
`;

const Radio = styled.input`
  appearance: none;
  width: 13px;
  height: 13px;
  border: 1px solid #999;
  border-radius: 50%;
  background: #fff;
  &:checked { background: radial-gradient(#333 0 3px, #fff 4px); }
`;

const Check = styled.input`
  appearance: none;
  position: relative;
  width: 13px;
  height: 13px;
  border: 1px solid #666;
  background: #fff;
  &:checked::after {
    content: '';
    position: absolute;
    left: 3px;
    top: -3px;
    width: 5px;
    height: 10px;
    border: solid #222;
    border-width: 0 3px 3px 0;
    transform: rotate(42deg);
  }
`;

const Field = styled.input`
  width: ${p => (p.$width ? `${p.$width}px` : 'auto')};
  flex: ${p => (p.$width ? 'none' : 1)};
  min-width: 0;
  height: 22px;
  padding: 0 4px;
  border: 1px solid #c6c6cf;
  background: #fbfbfe;
  &::placeholder { color: #999; opacity: 1; }
`;

const Collector = styled.button`
  display: block;
  width: 251px;
  height: 22px;
  padding-left: 16px;
  text-align: left;
  border: 1px solid #aaaab4;
  background: #ede9f6;
  color: #333;
`;

const FormRow = styled.div`
  display: flex;
  align-items: center;
  justify-content: space-between;
  padding: 0 5px 10px 8px;
`;

const Combo = styled.div`
  display: flex;
  width: ${p => p.$width}px;
  height: ${p => p.$height || 22}px;
  border: 1px solid ${p => (p.$muted ? '#cfcfd4' : '#a6a6aa')};
  background: ${p => p.$bg || '#fff'};
  color: ${p => (p.$muted ? '#a3a3a3' : '#444')};
`;

const Select = styled.select`
  appearance: none;
  flex: 1;
  min-width: 0;
  padding: 0 4px;
  border: 0;
  background: none;
  opacity: 1;
`;

const ComboArrow = styled.span`
  width: 14px;
  display: flex;
  align-items: center;
  justify-content: center;
  border-left: 1px solid #cfcfd4;
  background: linear-gradient(#fafafa, #e6e6e8);
`;

function ComboBox({ label, value, width, height, muted, bg }) {
  return (
    <Combo $width={width} $height={height} $muted={muted} $bg={bg}>
      <Select aria-label={label} disabled={muted} defaultValue={value}>
        <option>{value}</option>
      </Select>
      <ComboArrow><Caret $color={muted ? '#b5b5b5' : '#444'} /></ComboArrow>
    </Combo>
  );
}

const ResultRow = styled.div`
  display: flex;
  align-items: flex-end;
  gap: 17px;
  padding: 18px 0 10px 11px;
`;

const ResultBox = styled.div`
  width: 312px;
  display: grid;
  grid-template-columns: 1fr 18px;
  grid-template-rows: 122px 18px;
  border: 1px solid #a6a6aa;
  background: #f1f1f2;
`;

const ResultText = styled.textarea`
  display: block;
  border: 0;
  margin-right: 2px;
  padding: 4px 0 0 3px;
  line-height: 16px;
  resize: none;
  overflow: hidden;
  white-space: pre;
  background: none;
`;

const ScrollTrack = styled.div`
  display: flex;
  flex-direction: ${p => (p.$vertical ? 'column' : 'row')};
  border: 1px solid #dadade;
  background: #ebebed;
`;

const ScrollButton = styled.button`
  width: 16px;
  height: 16px;
  display: flex;
  align-items: center;
  justify-content: center;
  background: #f7f7f8;
`;

const ScrollArrow = styled.span`
  border: 4px solid transparent;
  ${p => p.$dir === 'up' && css`border-bottom: 5px solid #444; border-top: 0;`}
  ${p => p.$dir === 'down' && css`border-top: 5px solid #444; border-bottom: 0;`}
  ${p => p.$dir === 'left' && css`border-right: 5px solid #444; border-left: 0;`}
  ${p => p.$dir === 'right' && css`border-left: 5px solid #444; border-right: 0;`}
`;

const Thumb = styled.span`
  display: flex;
  align-items: center;
  justify-content: center;
  width: ${p => (p.$vertical ? 'auto' : '116px')};
  height: ${p => (p.$vertical ? '16px' : 'auto')};
  border: 1px solid #cfcfd4;
  background: #fcfcfc;
  &::after {
    content: '';
    width: ${p => (p.$vertical ? 8 : 11)}px;
    height: ${p => (p.$vertical ? 11 : 7)}px;
    background: repeating-linear-gradient(${p => (p.$vertical ? '180deg' : '90deg')}, #b8b8bc 0 1px, transparent 1px 3px);
  }
`;

const Spacer = styled.span`
  flex: 1;
`;

const InfoBadge = styled.button`
  width: 14px;
  height: 20px;
  margin-bottom: 5px;
  border-radius: 4px;
  border: 1px solid #14267e;
  background: #2748bd;
  color: #fff;
  font-family: "Liberation Serif", serif;
  font-weight: bold;
  font-size: 20px;
  line-height: 16px;
`;

const NameRow = styled.div`
  display: flex;
  gap: 4px;
  padding: 0 5px 5px 8px;
`;

const Actions = styled.div`
  display: flex;
  justify-content: space-between;
  padding: 3px 26px;
`;

const ActionButton = styled.button`
  width: 40px;
  height: 28px;
  display: flex;
  align-items: center;
  justify-content: center;
  border: 1px solid ${p => (p.$on ? '#8ac6e6' : '#cfcfd6')};
  border-radius: 3px;
  background: ${p => (p.$on ? 'linear-gradient(#bfe6fa, #8dd0f5)' : 'linear-gradient(#fff, #ededf0)')};
  box-shadow: 0 1px 1px #c4c4c8;
`;

const resultText = `VOLUMEN =  6.9619314e+03  MM^3
FLÄCHENINHALT =  3.5597156e+03  MM^2
MITTLERE DICHTE =  1.0700000e-09 TONNE / MM^3
MASSE =  7.4492666e-06 TONNE

SCHWERPUNKT in Bezug auf den Koordinatenrahmen
X   Y   Z  0.0000000e+00  1.2895488e+01 -7.9571`;

function MassDialog() {
  return (
    <Dialog onSubmit={e => e.preventDefault()}>
      <DialogInner>
        <DialogTitle>
          <DialogName>Masseneigenschaften</DialogName>
          <IconButton type="button" aria-label="Schließen">
            <Svg width="12" height="12" viewBox="0 0 10 10">
              <path d="M2 2l6 6M8 2L2 8" stroke="#666" strokeWidth="2" />
            </Svg>
          </IconButton>
        </DialogTitle>
        <DialogTabs>
          <DialogTab type="button" $active>Analyse</DialogTab>
          <DialogTab type="button">KE</DialogTab>
        </DialogTabs>
        <Page>
          <Section $pad="7px 5px 7px 11px">
            <Choices>
              <Choice><Radio type="radio" name="geo" defaultChecked />Volumengeometrie</Choice>
              <Choice><Radio type="radio" name="geo" />Sammelfläche</Choice>
            </Choices>
            <SinkField><Field aria-label="Sammelfläche" $width={212} /></SinkField>
          </Section>
          <Section $pad="16px 8px 3px 11px">
            <Choices>KSYS</Choices>
            <div>
              <Collector type="button">Elemente auswählen</Collector>
              <CheckRow><Check type="checkbox" defaultChecked />Standard verwenden</CheckRow>
            </div>
          </Section>
          <DensityBlock>
            <FormRow>Dichte<ComboBox label="Dichte" value="1.000000e+00" width={264} muted /></FormRow>
            <FormRow>Genauigkeit<ComboBox label="Genauigkeit" value="0.00001000" width={244} /></FormRow>
          </DensityBlock>
          <ResultRow>
            <ResultBox>
              <ResultText readOnly aria-label="Ergebnis" value={resultText} wrap="off" />
              <ScrollTrack $vertical>
                <ScrollButton type="button" aria-label="Nach oben"><ScrollArrow $dir="up" /></ScrollButton>
                <Thumb $vertical />
                <Spacer />
                <ScrollButton type="button" aria-label="Nach unten"><ScrollArrow $dir="down" /></ScrollButton>
              </ScrollTrack>
              <ScrollTrack>
                <ScrollButton type="button" aria-label="Nach links"><ScrollArrow $dir="left" /></ScrollButton>
                <Thumb />
                <Spacer />
                <ScrollButton type="button" aria-label="Nach rechts"><ScrollArrow $dir="right" /></ScrollButton>
              </ScrollTrack>
            </ResultBox>
            <InfoBadge type="button">i</InfoBadge>
          </ResultRow>
          <NameRow>
            <ComboBox label="Analyseart" value="Schnell" width={98} height={23} bg="#f6f6f7" />
            <Field aria-label="Name" placeholder="Mass_Prop_1" />
          </NameRow>
        </Page>
        <Actions>
          <ActionButton type="button" $on aria-label="Vorschau"><Glyph name="glasses" size={22} /></ActionButton>
          <ActionButton type="button" aria-label="Wiederholen"><Glyph name="repeat" size={18} /></ActionButton>
          <ActionButton aria-label="OK"><Glyph name="ok" size={18} /></ActionButton>
          <ActionButton type="button" aria-label="Abbrechen"><Glyph name="cancel" /></ActionButton>
        </Actions>
      </DialogInner>
    </Dialog>
  );
}

/* ---------- status bar ---------- */

const StatusBar = styled.footer`
  display: flex;
  align-items: center;
  height: 37px;
  padding: 0 17px 0 6px;
  border-top: 2px solid #9aa1a9;
  background: #efeff1;
`;

const StatusToggle = styled.button`
  width: 22px;
  height: 22px;
  margin: 6px 4px 0 0;
  display: flex;
  align-items: center;
  justify-content: center;
  border: 1px solid ${p => (p.$on ? '#8a8a90' : '#dadade')};
  background: #f6f6f8;
`;

const Message = styled.div`
  display: flex;
  align-items: center;
  flex: 1;
  padding: 0 0 6px 4px;
  font-size: 12px;
  font-weight: bold;
  color: #555;
`;

const StatusDivider = styled(Divider)`
  margin: 7px 0 3px 4px;
`;

const ViewTools = styled.div`
  display: flex;
  align-items: center;
  gap: 8px;
  padding: 0 40px 4px 8px;
`;

const Filters = styled.div`
  display: flex;
  align-items: center;
  gap: 7px;
  padding: 0 96px 0 2px;
`;

const RegenState = styled.span`
  width: 24px;
  height: 10px;
  display: flex;
  align-items: center;
  gap: 2px;
  &::before {
    content: '';
    width: 10px;
    height: 10px;
    border-radius: 50%;
    background: #bcbcc0;
  }
  &::after {
    content: '';
    width: 12px;
    height: 4px;
    background: repeating-linear-gradient(90deg, #d6d6da 0 4px, transparent 4px 6px);
  }
`;

const StatusButton = styled.button`
  width: 39px;
  height: 27px;
  display: flex;
  align-items: center;
  justify-content: center;
  border: 1px solid ${p => (p.$flat ? '#dcdce0' : '#b9b9bf')};
  border-radius: 3px;
  background: ${p => (p.$flat ? '#ececee' : 'linear-gradient(#fff, #ececee)')};
`;

function Status() {
  return (
    <StatusBar>
      <StatusToggle $on aria-label="Navigator"><Glyph name="treeNodes" /></StatusToggle>
      <StatusToggle aria-label="Browser"><Glyph name="browser" size={18} /></StatusToggle>
      <StatusDivider />
      <Message><Glyph name="prompt" size={14} />Koordinatensystem auswählen</Message>
      <Divider />
      <ViewTools>
        <Glyph name="refit" /><Glyph name="zoomIn" /><Glyph name="zoomOut" /><Glyph name="repaint" />
        <Glyph name="display" /><Caret />
        <Glyph name="saved3d" /><Caret />
        <Glyph name="camera" />
        <Glyph name="datum" /><Caret />
        <Glyph name="annotate" /><Glyph name="spin" />
      </ViewTools>
      <Divider />
      <Filters>
        <RegenState />
        <StatusButton aria-label="Suchen"><Glyph name="binoculars" size={18} /></StatusButton>
        <StatusButton $flat aria-label="Auswahlbox"><Glyph name="box3d" size={18} /></StatusButton>
      </Filters>
      <ComboBox label="Auswahlfilter" value="Koordinatensystem" width={178} bg="#fafafa" />
    </StatusBar>
  );
}

const tabs = ['Modell', 'Analyse', 'Anmerkungen erstellen', 'Rendern', 'Manikin', 'Werkzeuge', 'Ansicht', 'Anwendungen'];

function App() {
  return (
    <>
      <GlobalStyle />
      <Frame>
        <TitleBar>
          <QuickBar>
            <Glyph name="logo" />
            <QuickDivider />
            <Glyph name="fileNew" /><Glyph name="fileOpen" /><Glyph name="save" />
            <Glyph name="undo" /><Caret $color="#999" />
            <Glyph name="redo" /><Caret $color="#999" />
            <Glyph name="regen" />
            <Glyph name="windows" /><Caret />
            <Glyph name="closeDir" />
            <QuickDivider />
            <Caret />
          </QuickBar>
          <WindowTitle>MAIN_ASSY_1_C1_GEKIPPT (Aktiv) - Creo Parametric</WindowTitle>
          <WindowButtons>
            <IconButton aria-label="Minimieren"><Glyph name="minimize" /></IconButton>
            <IconButton aria-label="Maximieren"><Glyph name="maximize" /></IconButton>
            <IconButton aria-label="Schließen"><Glyph name="closeWin" /></IconButton>
          </WindowButtons>
        </TitleBar>
        <TabStrip>
          <Tab $file $edge>Datei<Caret $color="#777" /></Tab>
          <TabGroup>
            {tabs.map((t, i) => <Tab key={t} $active={t === 'Analyse'} $edge={i === 0}>{t}</Tab>)}
          </TabGroup>
          <TabTools>
            <IconButton aria-label="Multifunktionsleiste minimieren"><Glyph name="collapse" /></IconButton>
            <IconButton aria-label="Suchen"><Glyph name="search" /></IconButton>
            <IconButton aria-label="Lernen"><Glyph name="learn" /></IconButton>
            <Caret />
            <IconButton aria-label="Hilfe"><Glyph name="help" /></IconButton>
          </TabTools>
        </TabStrip>
        <RibbonBar />
        <Main>
          <ModelTree />
          <Viewport>
            <Model />
            <StyleState>Stil-Zustand:Master-Stil(+)</StyleState>
            <MassDialog />
            <Watermark><WatermarkName>莫西网</WatermarkName>www.3dmox.com</Watermark>
          </Viewport>
          <Gutter />
        </Main>
        <Status />
      </Frame>
    </>
  );
}

export default App;
